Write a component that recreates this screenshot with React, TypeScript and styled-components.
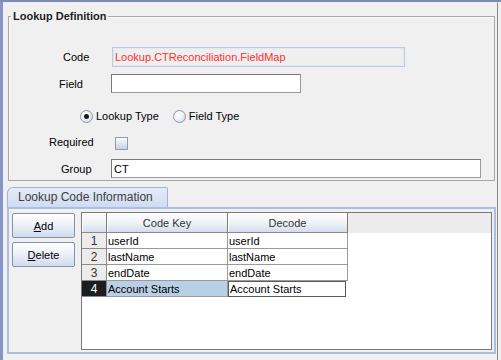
import React from 'react';
import styled, { createGlobalStyle } from 'styled-components';

const GlobalStyle = createGlobalStyle`
  html, body {
    margin: 0;
    padding: 0;
    background: #f0f0f0;
  }
  body {
    font-family: "Liberation Sans", Arial, sans-serif;
    font-size: 11px;
    color: #000;
  }
  * {
    box-sizing: border-box;
  }
`;

const Frame = styled.div`
  width: 501px;
  height: 360px;
  overflow: hidden;
  display: flex;
  flex-direction: column;
  background: #f0f0f0;
  border-top: 2px solid #7d8ab3;
  border-left: 3px solid #8595c5;
  padding-right: 3px;
`;

const Body = styled.div`
  flex: 1;
  display: flex;
  flex-direction: column;
  border-top: 1px solid #e8ecf7;
  border-right: 1px solid #8c8c8c;
`;

// titled border round the definition form
const DefinitionSet = styled.fieldset`
  margin: 7px 2px 0 5px;
  padding: 0 0 2px 0;
  min-width: 0;
  border: 1px solid #a5aaa5;
  box-shadow: inset 1px 1px 0 #fbfbfb;
  display: flex;
  flex-direction: column;
`;

const Legend = styled.legend`
  margin-left: 2px;
  padding: 0 2px;
  font-weight: bold;
  font-size: 11px;
  line-height: 13px;
  color: #1e1e1e;
`;

const FormRow = styled.div<{ $top: number; $h: number }>`
  display: flex;
  align-items: center;
  margin-top: ${(p) => p.$top}px;
  height: ${(p) => p.$h}px;
`;

const Label = styled.span<{ $indent: number }>`
  width: 102px;
  flex: none;
  padding-left: ${(p) => p.$indent}px;
`;

const CodeBox = styled.div`
  margin-left: 1px;
  width: 293px;
  height: 20px;
  display: flex;
  align-items: center;
  padding-left: 2px;
  background: #efefef;
  border: 1px solid #b9cce4;
  box-shadow: inset 0 0 0 1px #e2e9f4;
  color: #ff3030;
`;

const TextBox = styled.div<{ $w: number }>`
  width: ${(p) => p.$w}px;
  height: 19px;
  display: flex;
  align-items: center;
  padding-left: 2px;
  background: #fff;
  border: 1px solid #7a7a7a;
  border-right-color: #9a9a9a;
  border-bottom-color: #9a9a9a;
`;

const RadioGroup = styled.div`
  display: flex;
  align-items: center;
  padding-left: 71px;
  gap: 14px;
`;

const RadioOption = styled.span`
  display: flex;
  align-items: center;
  gap: 3px;
`;

const RadioCircle = styled.span<{ $on?: boolean }>`
  width: 13px;
  height: 13px;
  border-radius: 50%;
  border: 1px solid #8c97aa;
  background: radial-gradient(circle at 35% 35%, #ffffff 0%, #eef1f6 45%, #c9d0dc 100%);
  display: flex;
  align-items: center;
  justify-content: center;
  &::after {
    content: '';
    display: ${(p) => (p.$on ? 'block' : 'none')};
    width: 5px;
    height: 5px;
    border-radius: 50%;
    background: #1a1a1a;
  }
`;

const CheckBox = styled.span`
  margin-left: 4px;
  margin-top: 3px;
  width: 13px;
  height: 13px;
  border: 1px solid #8e9cb4;
  background: linear-gradient(#fdfdff, #c5d1e6);
`;

/* ---- tab area ---- */

const TabArea = styled.div`
  margin: 6px 1px 0 4px;
  display: flex;
  flex-direction: column;
`;

const TabStrip = styled.div`
  display: flex;
  height: 20px;
`;

const Tab = styled.div`
  width: 161px;
  height: 20px;
  padding-left: 10px;
  border: 1px solid #9fb4d6;
  border-bottom: none;
  border-radius: 6px 2px 0 0;
  background: linear-gradient(#e4ecf8, #cfdcf0);
  color: #404040;
  font-size: 12px;
  line-height: 19px;
`;

const Pane = styled.div`
  height: 147px;
  display: flex;
  gap: 6px;
  padding: 3px 2px 2px 3px;
  border: 2px solid #abbfe3;
`;

const ButtonColumn = styled.div`
  margin-top: 1px;
  display: flex;
  flex-direction: column;
  gap: 4px;
`;

const Button = styled.button`
  width: 63px;
  height: 25px;
  padding: 0;
  font-family: inherit;
  font-size: 11px;
  color: #000;
  border: 1px solid #8293ad;
  border-radius: 2px;
  background: linear-gradient(#ffffff, #eef2f8 45%, #cfdbee);
`;

const Table = styled.div`
  width: 411px;
  height: 138px;
  display: flex;
  flex-direction: column;
  border: 1px solid #7a7a7a;
  background: #fff;
`;

const HeaderRow = styled.div`
  display: flex;
  height: 20px;
  flex: none;
  background: #ececec;
`;

const HeaderCell = styled.div<{ $w: number }>`
  width: ${(p) => p.$w}px;
  display: flex;
  align-items: center;
  justify-content: center;
  color: #333;
  border-right: 1px solid #7c7c7c;
  border-bottom: 1px solid #8a8a8a;
  background: linear-gradient(#fdfdfd, #eef2f7 55%, #d3ddec);
  box-shadow: inset 1px 1px 0 #fff;
`;

const BodyRow = styled.div`
  display: flex;
  height: 16px;
`;

const RowHead = styled.div<{ $active?: boolean }>`
  width: 25px;
  display: flex;
  align-items: center;
  justify-content: center;
  font-size: 12px;
  color: ${(p) => (p.$active ? '#fff' : '#333')};
  background: ${(p) => (p.$active ? '#1d1d1d' : '#ececec')};
  border-right: 1px solid #8a8a8a;
  border-bottom: 1px solid #8a8a8a;
`;

const Cell = styled.div<{ $w: number; $selected?: boolean }>`
  width: ${(p) => p.$w}px;
  display: flex;
  align-items: center;
  padding-left: 1px;
  white-space: nowrap;
  overflow: hidden;
  background: ${(p) => (p.$selected ? '#b9cfe6' : '#fff')};
  border-right: 1px solid #9a9a9a;
  border-bottom: 1px solid #9a9a9a;
`;

const EditorCell = styled.div`
  width: 118px;
  display: flex;
  align-items: center;
  padding-left: 1px;
  white-space: nowrap;
  background: #fff;
  border: 1px solid #5a5a5a;
`;

const rows = [
  { key: 'userId', decode: 'userId' },
  { key: 'lastName', decode: 'lastName' },
  { key: 'endDate', decode: 'endDate' },
  { key: 'Account Starts', decode: 'Account Starts' },
];

export default function App() {
  const editing = 3;

  return (
    <>
      <GlobalStyle />
      <Frame>
        <Body>
          <DefinitionSet>
            <Legend>Lookup Definition</Legend>
            <FormRow $top={24} $h={20}>
              <Label $indent={54}>Code</Label>
              <CodeBox>Lookup.CTReconciliation.FieldMap</CodeBox>
            </FormRow>
            <FormRow $top={7} $h={19}>
              <Label $indent={50}>Field</Label>
              <TextBox $w={190} />
            </FormRow>
            <FormRow $top={16} $h={14}>
              <RadioGroup>
                <RadioOption>
                  <RadioCircle $on />
                  Lookup Type
                </RadioOption>
                <RadioOption>
                  <RadioCircle />
                  Field Type
                </RadioOption>
              </RadioGroup>
            </FormRow>
            <FormRow $top={12} $h={14}>
              <Label $indent={40}>Required</Label>
              <CheckBox />
            </FormRow>
            <FormRow $top={10} $h={19}>
              <Label $indent={52}>Group</Label>
              <TextBox $w={370}>CT</TextBox>
            </FormRow>
          </DefinitionSet>

          <TabArea>
            <TabStrip>
              <Tab>Lookup Code Information</Tab>
            </TabStrip>
            <Pane>
              <ButtonColumn>
                <Button>
                  <u>A</u>dd
                </Button>
                <Button>
                  <u>D</u>elete
                </Button>
              </ButtonColumn>
              <Table>
                <HeaderRow>
                  <HeaderCell $w={25} />
                  <HeaderCell $w={121}>Code Key</HeaderCell>
                  <HeaderCell $w={120}>Decode</HeaderCell>
                </HeaderRow>
                {rows.map((r, i) => (
                  <BodyRow key={r.key}>
                    <RowHead $active={i === editing}>{i + 1}</RowHead>
                    <Cell $w={121} $selected={i === editing}>
                      {r.key}
                    </Cell>
                    {i === editing ? (
                      <EditorCell>{r.decode}</EditorCell>
                    ) : (
                      <Cell $w={120}>{r.decode}</Cell>
                    )}
                  </BodyRow>
                ))}
              </Table>
            </Pane>
          </TabArea>
        </Body>
      </Frame>
    </>
  );
}
